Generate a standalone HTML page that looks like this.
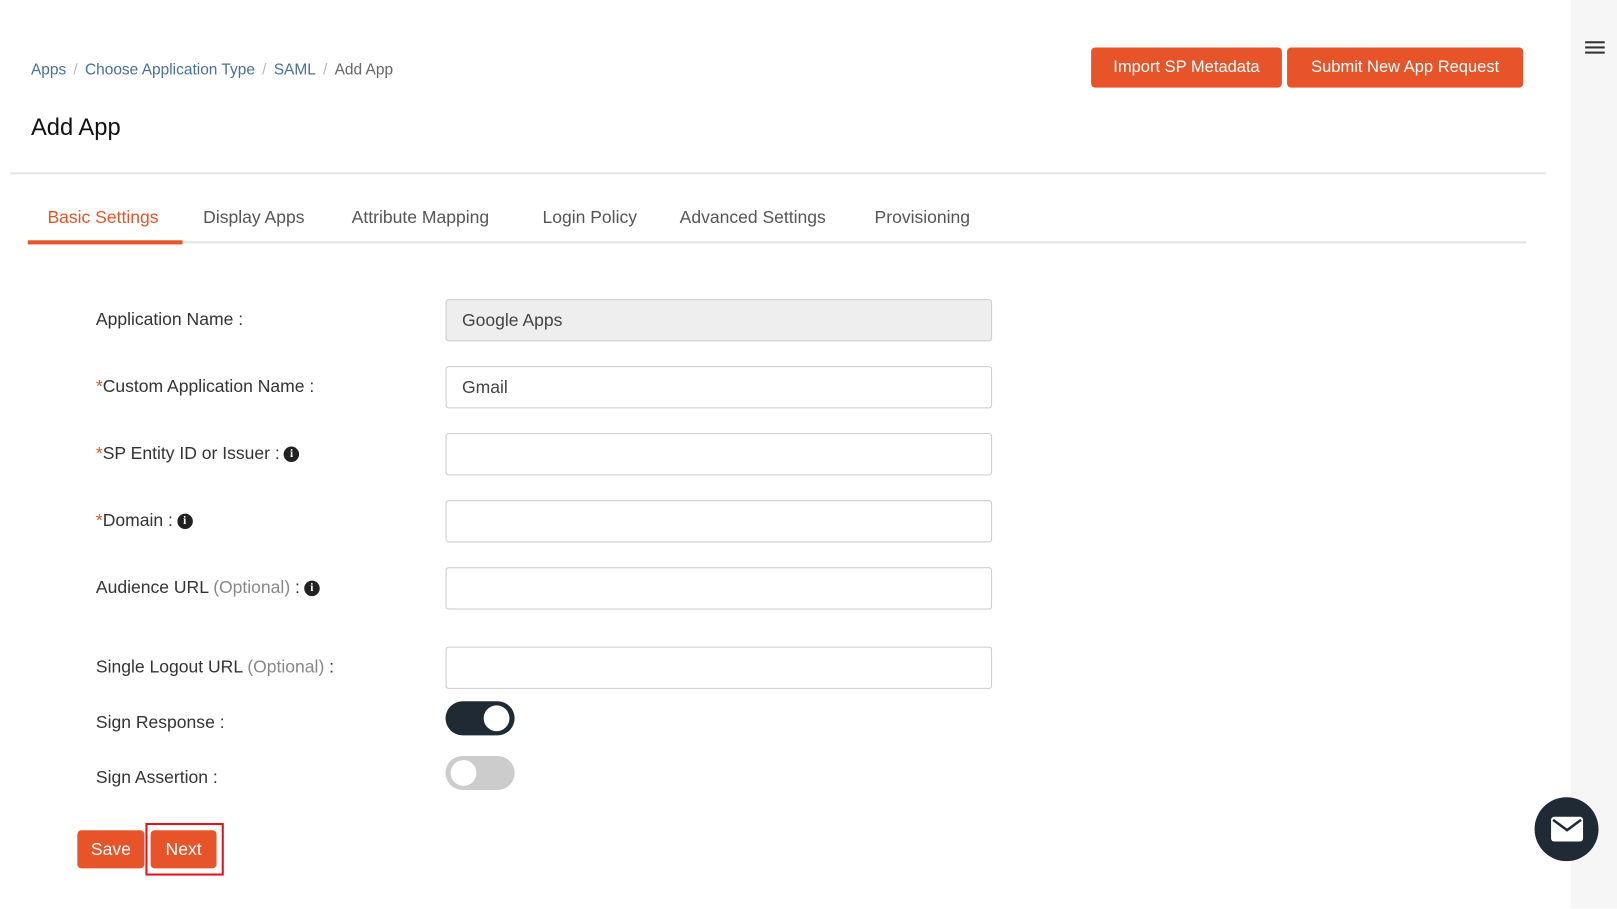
<!DOCTYPE html><html><head><style>
body{margin:0;width:1617px;height:881px;background:#fff;font-family:"Liberation Sans",sans-serif;position:relative;overflow:hidden;color:#333}
#w{position:absolute;left:0;top:0;width:1568px;height:855px;transform:scale(1.0313);transform-origin:0 0}
.a{position:absolute}
.side{left:1523px;top:0;width:94px;height:881px;background:#f6f6f7}
.bc{top:59px;left:30px;font-size:15px;color:#4a6f9c}
.bc span.s{color:#bbb;margin:0 7px}
.btn{background:#e8542a;color:#fff;border-radius:4px;font-size:16px;text-align:center}
.lbl{left:93px;font-size:17px;color:#333}
.inp{left:432px;border:1px solid #ccc;border-radius:3px;font-size:17px;line-height:39px;padding-left:15px;box-sizing:border-box;width:530px;height:41px;color:#444}
.tab{top:201px;font-size:17px;color:#555}
.i{display:inline-block;width:15px;height:15px;border-radius:50%;background:#222;color:#fff;font-size:11px;font-weight:bold;text-align:center;line-height:15px;font-family:"Liberation Serif",serif;vertical-align:2px;margin-left:4px}
.opt{color:#888}
.r{color:#e8542a}
</style></head><body><div id="w">
<div class="a side"></div>
<div class="a" style="left:1537px;top:40px;width:19px;height:2px;background:#333;box-shadow:0 5px 0 #333,0 10px 0 #333"></div>
<div class="a bc">Apps<span class="s">/</span>Choose Application Type<span class="s">/</span>SAML<span class="s">/</span><span style="color:#666">Add App</span></div>
<div class="a btn" style="left:1058px;top:46px;width:185px;height:39px;line-height:39px">Import SP Metadata</div>
<div class="a btn" style="left:1248px;top:46px;width:229px;height:39px;line-height:39px">Submit New App Request</div>
<div class="a" style="left:30px;top:110px;font-size:23px;color:#111">Add App</div>
<div class="a" style="left:10px;top:167px;width:1489px;height:2px;background:#e6e6e6"></div>
<div class="a" style="left:27px;top:234px;width:1453px;height:2px;background:#e3e3e3"></div>
<div class="a" style="left:27px;top:233px;width:150px;height:4px;background:#e8542a"></div>
<div class="a tab" style="left:46px;color:#e8542a">Basic Settings</div>
<div class="a tab" style="left:197px">Display Apps</div>
<div class="a tab" style="left:341px">Attribute Mapping</div>
<div class="a tab" style="left:526px">Login Policy</div>
<div class="a tab" style="left:659px">Advanced Settings</div>
<div class="a tab" style="left:848px">Provisioning</div>

<div class="a lbl" style="top:300px">Application Name :</div>
<div class="a inp" style="top:290px;background:#eee">Google Apps</div>
<div class="a lbl" style="top:365px"><span class="r">*</span>Custom Application Name :</div>
<div class="a inp" style="top:355px">Gmail</div>
<div class="a lbl" style="top:430px"><span class="r">*</span>SP Entity ID or Issuer :<span class="i">i</span></div>
<div class="a inp" style="top:420px"></div>
<div class="a lbl" style="top:495px"><span class="r">*</span>Domain :<span class="i">i</span></div>
<div class="a inp" style="top:485px"></div>
<div class="a lbl" style="top:560px">Audience URL <span class="opt">(Optional)</span> :<span class="i">i</span></div>
<div class="a inp" style="top:550px"></div>
<div class="a lbl" style="top:637px">Single Logout URL <span class="opt">(Optional)</span> :</div>
<div class="a inp" style="top:627px"></div>
<div class="a lbl" style="top:691px">Sign Response :</div>
<div class="a" style="left:432px;top:680px;width:67px;height:33px;border-radius:17px;background:#1f2a35"><div class="a" style="left:37px;top:4px;width:25px;height:25px;border-radius:50%;background:#fff"></div></div>
<div class="a lbl" style="top:744px">Sign Assertion :</div>
<div class="a" style="left:432px;top:733px;width:67px;height:33px;border-radius:17px;background:#ccc"><div class="a" style="left:5px;top:4px;width:25px;height:25px;border-radius:50%;background:#fff"></div></div>
<div class="a btn" style="left:75px;top:805px;width:65px;height:37px;line-height:37px;font-size:17px">Save</div>
<div class="a" style="left:141px;top:798px;width:76px;height:51px;border:2px solid #e0141e;box-sizing:border-box"></div>
<div class="a btn" style="left:146px;top:805px;width:64px;height:37px;line-height:37px;font-size:17px">Next</div>
<div class="a" style="left:1488px;top:773px;width:62px;height:62px;border-radius:50%;background:#1f2a35">
<svg width="62" height="62" viewBox="0 0 62 62"><rect x="16" y="19" width="31" height="24" rx="3" fill="#fff"/><path d="M18 22 L31.5 32 L45 22" stroke="#1f2a35" stroke-width="2.5" fill="none"/></svg></div>
</div></body></html>
